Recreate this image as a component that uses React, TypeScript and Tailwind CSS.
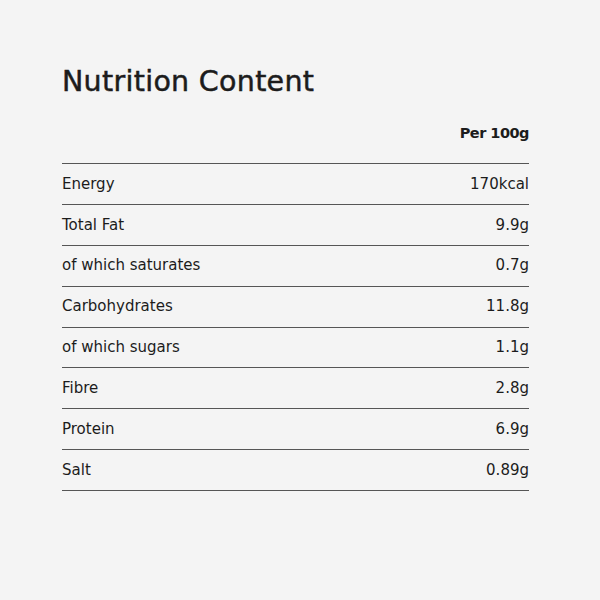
const rows = [
  { label: "Energy", value: "170kcal" },
  { label: "Total Fat", value: "9.9g" },
  { label: "of which saturates", value: "0.7g" },
  { label: "Carbohydrates", value: "11.8g" },
  { label: "of which sugars", value: "1.1g" },
  { label: "Fibre", value: "2.8g" },
  { label: "Protein", value: "6.9g" },
  { label: "Salt", value: "0.89g" },
];

export default function App() {
  return (
    <div className="min-h-[600px] bg-[#f4f4f4] px-[62px] pt-[65px] text-[#1c1c1c] font-['DejaVu_Sans',sans-serif]">
      <h1 className="text-[28.5px] leading-[34px] mb-[24px] tracking-[0.3px] [-webkit-text-stroke:0.5px_#1c1c1c]">
        Nutrition Content
      </h1>

      <div className="w-[467px]">
        <div className="flex justify-end pb-[20px] border-b border-[#555]">
          <span className="text-[14.5px] leading-[20px] font-bold tracking-[-0.5px]">Per 100g</span>
        </div>

        {rows.map((r, i) => (
          <div
            key={i}
            className="h-[40.875px] flex items-center justify-between border-b border-[#555] text-[15px]"
          >
            <span>{r.label}</span>
            <span>{r.value}</span>
          </div>
        ))}
      </div>
    </div>
  );
}
